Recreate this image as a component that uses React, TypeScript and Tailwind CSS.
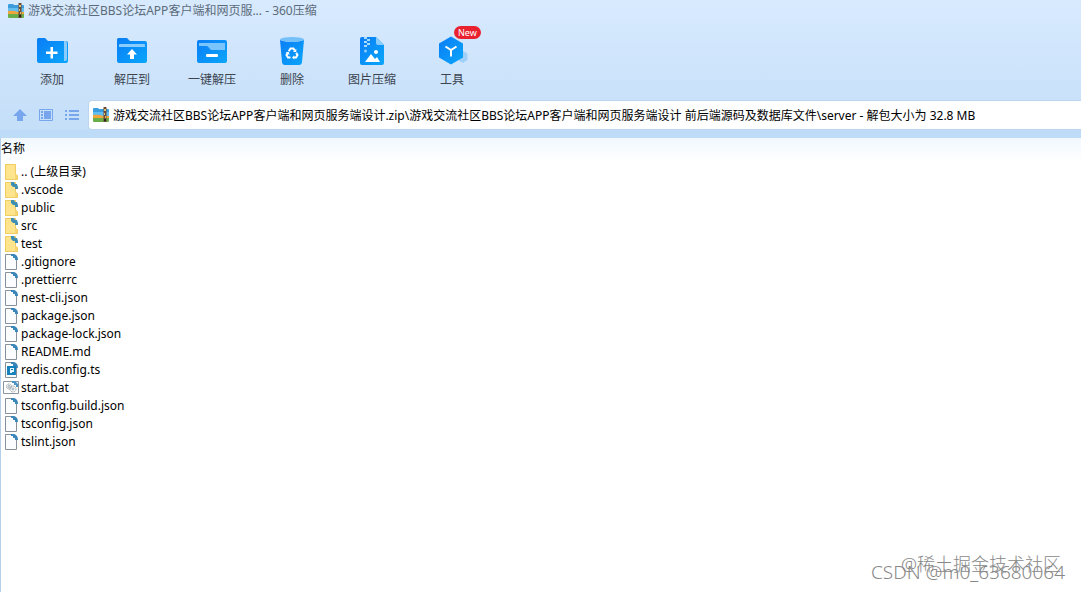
import React from "react";

type FileKind = "parent" | "folder" | "file" | "ts" | "bat";

interface Entry {
    name: string;
    kind: FileKind;
}

interface Tool {
    label: string;
    icon: React.ReactNode;
    badge?: string;
}

const entries: Entry[] = [
    { name: ".. (上级目录)", kind: "parent" },
    { name: ".vscode", kind: "folder" },
    { name: "public", kind: "folder" },
    { name: "src", kind: "folder" },
    { name: "test", kind: "folder" },
    { name: ".gitignore", kind: "file" },
    { name: ".prettierrc", kind: "file" },
    { name: "nest-cli.json", kind: "file" },
    { name: "package.json", kind: "file" },
    { name: "package-lock.json", kind: "file" },
    { name: "README.md", kind: "file" },
    { name: "redis.config.ts", kind: "ts" },
    { name: "start.bat", kind: "bat" },
    { name: "tsconfig.build.json", kind: "file" },
    { name: "tsconfig.json", kind: "file" },
    { name: "tslint.json", kind: "file" },
];

const ArchiveIcon = () => (
    <svg viewBox="0 0 16 16" className="h-4 w-4 shrink-0" aria-hidden="true">
        <path d="M0 2q0-1 1-1h4l1 1h9q1 0 1 1v3H0z" fill="#3b9ddd" />
        <path d="M0 5h16v4H0z" fill="#62bdf0" />
        <path d="M0 8q5-1 10 1h6v3H0z" fill="#f0a63a" />
        <path d="M0 11h16v3q0 1-1 1H1q-1 0-1-1z" fill="#6aae4a" />
        <path d="M10.500 0h3v15h-3z" fill="#6b4a35" />
        <path d="M11 2h2v2h-2zM11 6h1v2h-1zM12 9h1v2h-1z" fill="#e4c16a" />
        <path d="M11 12h2v2h-2z" fill="#2b241f" />
    </svg>
);

const IconGradient = ({ id }: { id: string }) => (
    <linearGradient id={id} x1="0" y1="0" x2="1" y2="1">
        <stop offset="0" stopColor="#0a7df6" />
        <stop offset="1" stopColor="#0aa6fa" />
    </linearGradient>
);

const AddIcon = () => (
    <svg viewBox="0 0 32 32" className="h-8 w-8">
        <IconGradient id="add-fill" />
        <path d="M1 5.500Q1 4 2.500 4H9l3 3h18q2 0 2 2v18q0 2-2 2H3q-2 0-2-2z" fill="url(#add-fill)" />
        <path d="M28 7h1.500q1.500 0 1.500 1.500V25q0 2-3 2z" fill="#8accfc" />
        <path d="M14.500 13h2.500v4.500h4.500V20H17v4.500h-2.500V20H10v-2.500h4.500z" fill="#fff" />
    </svg>
);

const ExtractIcon = () => (
    <svg viewBox="0 0 32 32" className="h-8 w-8">
        <IconGradient id="extract-fill" />
        <path d="M1 5.500Q1 4 2.500 4H11l3 3h15q2 0 2 2v18q0 2-2 2H3q-2 0-2-2z" fill="url(#extract-fill)" />
        <path d="M3 11q0-1 1-1h24q1 0 1 1v2H3z" fill="#8accfc" />
        <path d="M16 15l5 5.500h-3V25h-4v-4.500h-3z" fill="#fff" />
    </svg>
);

const QuickExtractIcon = () => (
    <svg viewBox="0 0 32 32" className="h-8 w-8">
        <IconGradient id="quick-fill" />
        <rect x="1" y="6" width="30" height="23" rx="2" fill="url(#quick-fill)" />
        <path d="M3 9h26v7H16q-1.500 0-2.500-1.500l-.7-1Q12 12 10.500 12H3z" fill="#79c4fb" />
        <rect x="10" y="20" width="12" height="3" rx="1" fill="#fff" />
    </svg>
);

const DeleteIcon = () => (
    <svg viewBox="0 0 32 32" className="h-8 w-8">
        <IconGradient id="delete-fill" />
        <path d="M4 6q12 4 24 0l-2 22q-.2 3-3 3H9q-2.800 0-3-3z" fill="url(#delete-fill)" />
        <ellipse cx="16" cy="5.500" rx="12" ry="2.500" fill="#74c0f8" />
        <g fill="none" stroke="#fff" strokeWidth="2">
            <path d="M12.800 17.200L14.500 14.500h3l1.200 2" />
            <path d="M20.200 18.800L21.500 21 20 23.500h-2.200" />
            <path d="M14.500 23.500H12L10.500 21l1-1.800" />
        </g>
        <path d="M20.300 14.700v3.300h-3.300zM18.200 21.500v4L16 23.500zM9.500 18.500l3.300-.8.7 3.200z" fill="#fff" />
    </svg>
);

const ImageZipIcon = () => (
    <svg viewBox="0 0 32 32" className="h-8 w-8">
        <IconGradient id="image-fill" />
        <path d="M4 5q0-2 2-2h14l8 8v18q0 2-2 2H6q-2 0-2-2z" fill="url(#image-fill)" />
        <path d="M20 3l8 8h-6q-2 0-2-2z" fill="#8accfc" />
        <path d="M8 3h3v2H8zM11 5h3v2h-3zM8 7h3v2H8zM11 9h3v2h-3zM8 11h3v2H8z" fill="#a7dcff" />
        <circle cx="9.500" cy="17" r="1.500" fill="#8accfc" />
        <circle cx="20" cy="18" r="2" fill="#fff" />
        <path d="M9 28l6-8 4 5 2-2 3 5z" fill="#fff" />
    </svg>
);

const ToolsIcon = () => (
    <svg viewBox="0 0 32 32" className="h-8 w-8">
        <IconGradient id="tools-fill" />
        <path d="M27 17l4.500 2.500v6.500L27 29l-5-3v-6z" fill="#9fd0fa" />
        <path d="M15 2.500l12 7v14l-12 7-12-7v-14z" fill="url(#tools-fill)" />
        <path d="M9.500 12.500L15 16l5.500-3.500M15 16v6.500" fill="none" stroke="#fff" strokeWidth="2" />
    </svg>
);

const tools: Tool[] = [
    { label: "添加", icon: <AddIcon /> },
    { label: "解压到", icon: <ExtractIcon /> },
    { label: "一键解压", icon: <QuickExtractIcon /> },
    { label: "删除", icon: <DeleteIcon /> },
    { label: "图片压缩", icon: <ImageZipIcon /> },
    { label: "工具", icon: <ToolsIcon />, badge: "New" },
];

const EntryIcon = ({ kind }: { kind: FileKind }) => {
    if (kind === "bat") {
        return (
            <svg viewBox="0 0 16 16" className="h-4 w-4 shrink-0" aria-hidden="true">
                <path d="M.5 1.500h15v12H.5z" fill="#fff" stroke="#8b959d" />
                <g fill="none" stroke="#9ba6ad" strokeWidth="1">
                    <circle cx="6" cy="6.500" r="2.500" strokeDasharray="1.500 .5" />
                    <circle cx="6" cy="6.500" r="1" />
                    <circle cx="10" cy="9" r="3" strokeDasharray="1.500 .5" />
                    <circle cx="10" cy="9" r="1" />
                </g>
                <path d="M9 1h3l3 3v3h-2V5h-2V3H9z" fill="#4a94c8" />
            </svg>
        );
    }

    const isFolder = kind === "parent" || kind === "folder";

    return (
        <svg viewBox="0 0 16 16" className="h-4 w-4 shrink-0" aria-hidden="true">
            {isFolder ? (
                <>
                    <path d="M2 0h11v10l2 2v4H2z" fill="#ffe48e" />
                    <path d="M2.500.5h10v10l2 1v4h-12z" fill="none" stroke="#efcd63" />
                    <path d="M12 11h2v4h-2z" fill="#f5d673" />
                </>
            ) : (
                <path d="M2.500.5h8l3 4v11h-11z" fill="#fafcfd" stroke="#889199" />
            )}
            {kind === "folder" && (
                <path d="M8 0h3l1 2h2l1 3v2h-3V5h-2L8 3z" fill="#3f8fb5" />
            )}
            {!isFolder && <path d="M8 0h3q4 1 4 6h-3V4h-2V2H8z" fill="#3b86b8" />}
            {kind === "ts" && (
                <>
                    <path d="M4 4h9v9H4z" fill="#1681bd" />
                    <path d="M7 6h4v4H9v1H7z" fill="#e7f7ff" />
                    <path d="M8 7h2v1H8z" fill="#1681bd" />
                </>
            )}
        </svg>
    );
};

const NavButtons = () => (
    <nav className="flex w-[88px] shrink-0 items-center gap-2.5 pl-3 text-[#78a6ec]">
        <button type="button" aria-label="Up" className="h-4 w-4">
            <svg viewBox="0 0 16 16" fill="currentColor">
                <path d="M8 2l7 7h-4v5H5V9H1z" />
            </svg>
        </button>
        <button type="button" aria-label="Preview" className="h-4 w-4">
            <svg viewBox="0 0 16 16" fill="currentColor">
                <path d="M1.500 2.500h13v11h-13z" fill="none" stroke="currentColor" />
                <path d="M6 4h7v8H6zM3 4h2v2H3zM3 7h2v2H3zM3 10h2v2H3z" />
            </svg>
        </button>
        <button type="button" aria-label="List" className="h-4 w-4">
            <svg viewBox="0 0 16 16" fill="currentColor">
                <path d="M1 3h2v2H1zM5 3h10v2H5zM1 7h2v2H1zM5 7h10v2H5zM1 11h2v2H1zM5 11h10v2H5z" />
            </svg>
        </button>
    </nav>
);

const FileTable = () => (
    <table className="w-full border-collapse text-left leading-[18px] text-black">
        <thead>
            <tr className="bg-linear-to-b from-[#f1f8fe] to-white">
                <th className="h-[25px] pb-1 font-normal">名称</th>
            </tr>
        </thead>
        <tbody>
            {entries.map((entry) => (
                <tr key={entry.name}>
                    <td className="p-0">
                        <div className="flex h-[18px] items-center gap-0.5 pl-0.5">
                            <EntryIcon kind={entry.kind} />
                            <span>{entry.name}</span>
                        </div>
                    </td>
                </tr>
            ))}
        </tbody>
    </table>
);

const App = () => (
    <div className="relative flex min-h-screen flex-col overflow-hidden bg-white font-['Noto_Sans','Noto_Sans_CJK_SC',sans-serif] text-xs">
        <header className="bg-linear-to-b from-[#d8eafe] to-[#c3def8]">
            <div className="flex h-[22px] items-center gap-1 pl-2 text-[#5c6b7a]">
                <ArchiveIcon />
                <h1>游戏交流社区BBS论坛APP客户端和网页服... - 360压缩</h1>
            </div>

            <div className="flex h-[78px] pt-3 pl-3 text-[#3b444f]">
                {tools.map((tool) => (
                    <button key={tool.label} type="button" className="flex w-20 flex-col items-center gap-1.5">
                        <span className="relative">
                            {tool.icon}
                            {tool.badge && (
                                <span className="absolute -top-2 left-[18px] rounded-full bg-[#e8232f] px-1 text-[9px] leading-[13px] text-white">
                                    {tool.badge}
                                </span>
                            )}
                        </span>
                        <span>{tool.label}</span>
                    </button>
                ))}
            </div>

            <div className="flex h-[30px]">
                <NavButtons />
                <label className="flex min-w-0 flex-1 items-center gap-1 rounded-l-sm border border-r-0 border-[#bdd5ee] bg-white pl-1">
                    <ArchiveIcon />
                    <input
                        aria-label="Path"
                        className="min-w-0 flex-1 pt-px text-black outline-none"
                        readOnly
                        value="游戏交流社区BBS论坛APP客户端和网页服务端设计.zip\游戏交流社区BBS论坛APP客户端和网页服务端设计 前后端源码及数据库文件\server - 解包大小为 32.8 MB"
                    />
                </label>
            </div>
            <div className="h-2 bg-[#bedcf8]" />
        </header>

        <main className="flex-1 border-l border-[#b4cfea]">
            <FileTable />
        </main>

        <div className="pointer-events-none absolute right-4 bottom-2 text-lg leading-6 font-light whitespace-nowrap text-[#888]">
            <span className="absolute right-1 bottom-2">@稀土掘金技术社区</span>
            <span className="text-[19px]">CSDN @m0_63680064</span>
        </div>
    </div>
);

export default App;
